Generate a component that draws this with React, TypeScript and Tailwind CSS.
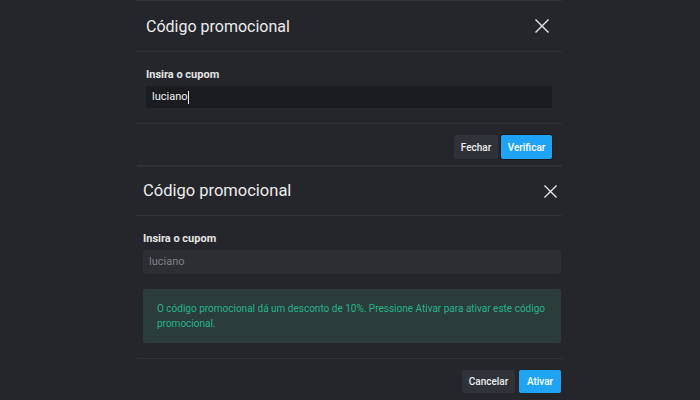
import React from "react";

const XIcon = ({ size }: { size: number }) => (
  <svg width={size} height={size} viewBox="0 0 14 14" fill="none">
    <path d="M1 1L13 13M13 1L1 13" stroke="#e8e8e8" strokeWidth="1.4" strokeLinecap="square" />
  </svg>
);

export default function App() {
  return (
    <div
      className="w-[700px] h-[400px] bg-[#25262b] overflow-hidden flex flex-col items-center"
      style={{ fontFamily: "Roboto, 'Noto Sans', Arial, sans-serif" }}
    >
      {/* Modal 1 */}
      <div className="w-[425px] ml-[-1px] border-y border-[#303237] flex flex-col">
        <div className="h-[51px] flex items-center justify-between pl-[9px] pr-[13px] border-b border-[#303237]">
          <span className="text-[16px] text-[#ececec] leading-none mt-[2px]">Código promocional</span>
          <XIcon size={14} />
        </div>
        <div className="pl-[9px] pr-[10px] pt-[16px] pb-[15px] flex flex-col border-b border-[#303237]">
          <label className="text-[11px] leading-[13px] font-bold text-[#e4e4e4] mb-[5px]">Insira o cupom</label>
          <div className="h-[22px] rounded-[2px] bg-[#1b1c20] flex items-center pl-[6px]">
            <span className="text-[11px] text-[#f0f0f0]">luciano</span>
            <span className="w-px h-[13px] bg-[#eeeeee]" />
          </div>
        </div>
        <div className="pt-[11px] pb-[6px] pr-[10px] flex justify-end gap-[3px]">
          <button className="h-[24px] w-[44px] rounded-[2px] bg-[#30323a] text-[10px] font-medium text-[#ececec]">Fechar</button>
          <button className="h-[24px] w-[51px] rounded-[2px] bg-[#1fa3f4] text-[10px] font-medium text-white ring-1 ring-[#1a1b1f]">Verificar</button>
        </div>
      </div>
      {/* Modal 2 */}
      <div className="w-[425px] ml-[-1px] border-t border-[#2c2e33] flex flex-col">
        <div className="h-[49px] flex items-center justify-between pl-[6px] pr-[5px] border-b border-[#303237]">
          <span className="text-[16.5px] text-[#ececec] leading-none mt-[1px]">Código promocional</span>
          <XIcon size={13} />
        </div>
        <div className="pl-[6px] pr-[1px] pt-[16px] pb-[15px] flex flex-col border-b border-[#303237]">
          <label className="text-[11px] leading-[13px] font-bold text-[#e4e4e4] mb-[5px]">Insira o cupom</label>
          <div className="h-[24px] rounded-[2px] bg-[#2c2e33] flex items-center pl-[6px]">
            <span className="text-[11px] text-[#7f8186]">luciano</span>
          </div>
          <div className="mt-[15px] h-[54px] rounded-[2px] bg-[#2b3d3b] px-[14px] py-[12px] text-[10px] leading-[15px] text-[#27b38c]">
            O código promocional dá um desconto de 10%. Pressione Ativar para ativar este código promocional.
          </div>
        </div>
        <div className="pt-[11px] pr-[1px] flex justify-end gap-[4px]">
          <button className="h-[23px] w-[53px] rounded-[2px] bg-[#30323a] text-[10px] font-medium text-[#ececec]">Cancelar</button>
          <button className="h-[23px] w-[42px] rounded-[2px] bg-[#1fa3f4] text-[10px] font-medium text-white">Ativar</button>
        </div>
      </div>
    </div>
  );
}
